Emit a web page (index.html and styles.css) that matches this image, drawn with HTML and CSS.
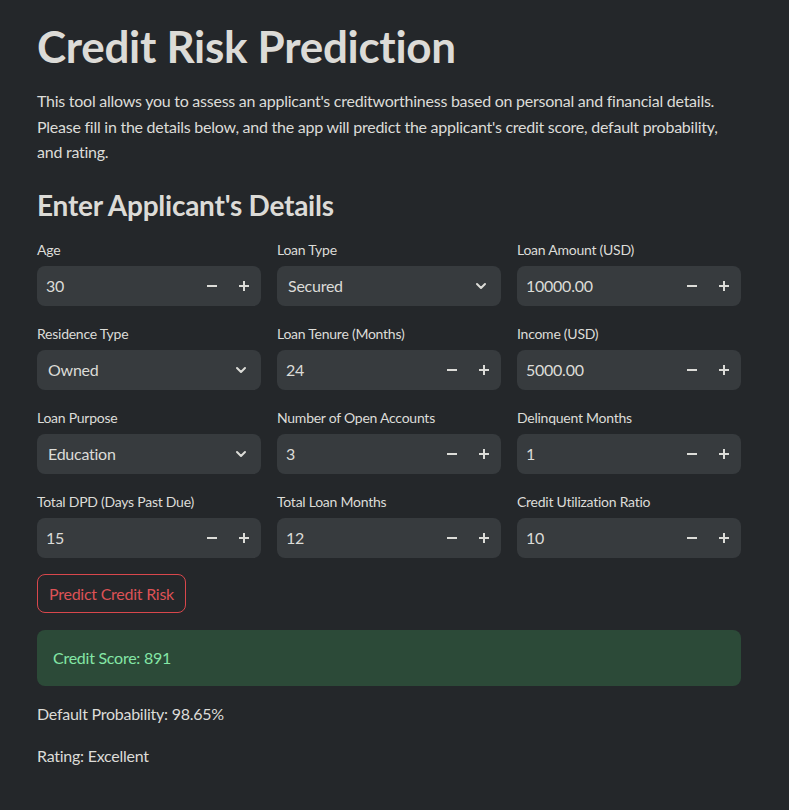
FILE: index.html
```html
<!DOCTYPE html>
<html lang="en">
<head>
<meta charset="utf-8">
<title>Credit Risk Prediction</title>
<link rel="stylesheet" href="styles.css">
</head>
<body>
<main class="page">
  <h1 class="title">Credit Risk Prediction</h1>
  <p class="intro">This tool allows you to assess an applicant's creditworthiness based on personal and financial details. Please fill in the details below, and the app will predict the applicant's credit score, default probability, and rating.</p>
  <h3 class="subtitle">Enter Applicant's Details</h3>

  <div class="grid">
    <div class="field">
      <label class="label">Age</label>
      <div class="number"><span class="value">30</span><span class="step"><svg width="12" height="12" viewBox="0 0 12 12"><path d="M1 6h10" stroke="currentColor" stroke-width="2"/></svg></span><span class="step"><svg width="12" height="12" viewBox="0 0 12 12"><path d="M1 6h10M6 1v10" stroke="currentColor" stroke-width="2"/></svg></span></div>
    </div>
    <div class="field">
      <label class="label">Loan Type</label>
      <div class="select"><span class="value">Secured</span><svg class="chev" width="14" height="14" viewBox="0 0 14 14"><path d="M3 5l4 4 4-4" fill="none" stroke="currentColor" stroke-width="2" stroke-linecap="round" stroke-linejoin="round"/></svg></div>
    </div>
    <div class="field">
      <label class="label">Loan Amount (USD)</label>
      <div class="number"><span class="value">10000.00</span><span class="step"><svg width="12" height="12" viewBox="0 0 12 12"><path d="M1 6h10" stroke="currentColor" stroke-width="2"/></svg></span><span class="step"><svg width="12" height="12" viewBox="0 0 12 12"><path d="M1 6h10M6 1v10" stroke="currentColor" stroke-width="2"/></svg></span></div>
    </div>

    <div class="field">
      <label class="label">Residence Type</label>
      <div class="select"><span class="value">Owned</span><svg class="chev" width="14" height="14" viewBox="0 0 14 14"><path d="M3 5l4 4 4-4" fill="none" stroke="currentColor" stroke-width="2" stroke-linecap="round" stroke-linejoin="round"/></svg></div>
    </div>
    <div class="field">
      <label class="label">Loan Tenure (Months)</label>
      <div class="number"><span class="value">24</span><span class="step"><svg width="12" height="12" viewBox="0 0 12 12"><path d="M1 6h10" stroke="currentColor" stroke-width="2"/></svg></span><span class="step"><svg width="12" height="12" viewBox="0 0 12 12"><path d="M1 6h10M6 1v10" stroke="currentColor" stroke-width="2"/></svg></span></div>
    </div>
    <div class="field">
      <label class="label">Income (USD)</label>
      <div class="number"><span class="value">5000.00</span><span class="step"><svg width="12" height="12" viewBox="0 0 12 12"><path d="M1 6h10" stroke="currentColor" stroke-width="2"/></svg></span><span class="step"><svg width="12" height="12" viewBox="0 0 12 12"><path d="M1 6h10M6 1v10" stroke="currentColor" stroke-width="2"/></svg></span></div>
    </div>

    <div class="field">
      <label class="label">Loan Purpose</label>
      <div class="select"><span class="value">Education</span><svg class="chev" width="14" height="14" viewBox="0 0 14 14"><path d="M3 5l4 4 4-4" fill="none" stroke="currentColor" stroke-width="2" stroke-linecap="round" stroke-linejoin="round"/></svg></div>
    </div>
    <div class="field">
      <label class="label">Number of Open Accounts</label>
      <div class="number"><span class="value">3</span><span class="step"><svg width="12" height="12" viewBox="0 0 12 12"><path d="M1 6h10" stroke="currentColor" stroke-width="2"/></svg></span><span class="step"><svg width="12" height="12" viewBox="0 0 12 12"><path d="M1 6h10M6 1v10" stroke="currentColor" stroke-width="2"/></svg></span></div>
    </div>
    <div class="field">
      <label class="label">Delinquent Months</label>
      <div class="number"><span class="value">1</span><span class="step"><svg width="12" height="12" viewBox="0 0 12 12"><path d="M1 6h10" stroke="currentColor" stroke-width="2"/></svg></span><span class="step"><svg width="12" height="12" viewBox="0 0 12 12"><path d="M1 6h10M6 1v10" stroke="currentColor" stroke-width="2"/></svg></span></div>
    </div>

    <div class="field">
      <label class="label">Total DPD (Days Past Due)</label>
      <div class="number"><span class="value">15</span><span class="step"><svg width="12" height="12" viewBox="0 0 12 12"><path d="M1 6h10" stroke="currentColor" stroke-width="2"/></svg></span><span class="step"><svg width="12" height="12" viewBox="0 0 12 12"><path d="M1 6h10M6 1v10" stroke="currentColor" stroke-width="2"/></svg></span></div>
    </div>
    <div class="field">
      <label class="label">Total Loan Months</label>
      <div class="number"><span class="value">12</span><span class="step"><svg width="12" height="12" viewBox="0 0 12 12"><path d="M1 6h10" stroke="currentColor" stroke-width="2"/></svg></span><span class="step"><svg width="12" height="12" viewBox="0 0 12 12"><path d="M1 6h10M6 1v10" stroke="currentColor" stroke-width="2"/></svg></span></div>
    </div>
    <div class="field">
      <label class="label">Credit Utilization Ratio</label>
      <div class="number"><span class="value">10</span><span class="step"><svg width="12" height="12" viewBox="0 0 12 12"><path d="M1 6h10" stroke="currentColor" stroke-width="2"/></svg></span><span class="step"><svg width="12" height="12" viewBox="0 0 12 12"><path d="M1 6h10M6 1v10" stroke="currentColor" stroke-width="2"/></svg></span></div>
    </div>
  </div>

  <button class="btn" type="button">Predict Credit Risk</button>

  <div class="success">Credit Score: 891</div>
  <p class="result">Default Probability: 98.65%</p>
  <p class="result">Rating: Excellent</p>
</main>
</body>
</html>
```

FILE: styles.css
```css
* { box-sizing: border-box; }
html, body {
  margin: 0;
  background: #24272a;
}
body {
  font-family: "Lato", "Liberation Sans", sans-serif;
  color: #dcdcd8;
  letter-spacing: -0.25px;
}
.page {
  width: 704px;
  margin-left: 37px;
  padding-top: 20px;
  padding-bottom: 40px;
}
.title {
  margin: 0;
  font-size: 44px;
  font-weight: 700;
  line-height: 52px;
  letter-spacing: -0.3px;
  color: #dcdbd7;
}
.intro {
  margin: 16px 0 0;
  font-size: 16px;
  line-height: 25.6px;
  color: #dcdcd8;
}
.subtitle {
  margin: 22px 0 0;
  font-size: 28px;
  font-weight: 700;
  line-height: 36px;
  color: #dcdbd7;
}
.grid {
  margin-top: 17px;
  display: grid;
  grid-template-columns: repeat(3, 1fr);
  column-gap: 16px;
  row-gap: 18px;
}
.field {
  display: flex;
  flex-direction: column;
  gap: 6px;
}
.label {
  font-size: 14px;
  line-height: 20px;
  color: #dcdcd8;
}
.number, .select {
  height: 40px;
  border-radius: 8px;
  background: #373b3e;
  display: flex;
  align-items: center;
  font-size: 16px;
  color: #dcdcd8;
}
.number { padding: 0 1px 0 9px; }
.select { padding: 0 13px 0 11px; }
.value { flex: 1; }
.step {
  width: 32px;
  display: flex;
  justify-content: center;
  align-items: center;
  color: #dcdcd8;
}
.chev { color: #dcdcd8; }
.btn {
  margin-top: 16px;
  display: block;
  height: 39px;
  padding: 0 11px;
  border: 1px solid #d9474c;
  border-radius: 8px;
  background: transparent;
  font-family: inherit;
  font-size: 16px;
  letter-spacing: -0.25px;
  color: #dd5256;
}
.success {
  margin-top: 17px;
  height: 56px;
  padding: 0 16px;
  border-radius: 8px;
  background: #2c4a38;
  color: #84e6a6;
  font-size: 16px;
  display: flex;
  align-items: center;
}
.result {
  margin: 15px 0 0;
  font-size: 16px;
  line-height: 25.6px;
}
.result + .result { margin-top: 17px; }
```
